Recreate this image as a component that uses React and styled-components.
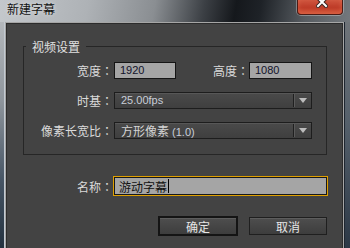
import React from 'react';
import styled, { createGlobalStyle } from 'styled-components';

const CJK = `"Noto Sans CJK SC", "Noto Sans", sans-serif`;
const LAT = `"Liberation Sans", "Noto Sans CJK SC", sans-serif`;

const Global = createGlobalStyle`
  html, body { margin: 0; padding: 0; width: 350px; height: 248px; overflow: hidden; background: #434343; }
  * { box-sizing: border-box; }
`;

const Window = styled.div`
  width: 350px;
  height: 248px;
  display: flex;
  flex-direction: column;
  overflow: hidden;
`;

const TitleBar = styled.div`
  height: 22px;
  flex: none;
  display: flex;
  align-items: flex-start;
  justify-content: space-between;
  padding: 0 7px;
  background: linear-gradient(100deg, #c4c8cc 0%, #aeb2b6 25%, #8a8e92 44%, #3c4045 58%, #15181c 67%, #1e2227 74%, #575c61 87%, #73787d 100%);
`;

const Title = styled.div`
  font-family: ${CJK};
  font-size: 12px;
  line-height: 14px;
  padding-top: 2px;
  color: #121212;
  text-shadow: 0 0 4px rgba(255, 255, 255, 0.6);
`;

const CloseButton = styled.div`
  width: 46px;
  height: 15px;
  display: flex;
  justify-content: center;
  align-items: flex-start;
  overflow: hidden;
  border: 1px solid #4a1c16;
  border-top: none;
  border-radius: 0 0 4px 4px;
  background: linear-gradient(#d0563f, #bd3a27 55%, #c5452d);
  box-shadow: 0 0 0 1px rgba(255, 255, 255, 0.3), inset 0 -3px 5px rgba(255, 150, 110, 0.35);
  svg { margin-left: 4px; margin-top: -4px; flex: none; }
`;

const Body = styled.div`
  flex: 1;
  display: flex;
  min-height: 0;
`;

const LeftEdge = styled.div`
  width: 5px;
  flex: none;
  background: linear-gradient(to bottom, #b4b8bc 0%, #8e959c 35%, #465565 70%, #243240 100%);
  box-shadow: inset -1px 0 0 #c2cad2;
`;

const RightEdge = styled.div`
  width: 6px;
  flex: none;
  background: linear-gradient(to bottom, #6f7479 0%, #55606b 45%, #2c3846 100%);
  box-shadow: inset 1px 0 0 #1e2630;
`;

const Panel = styled.div`
  flex: 1;
  display: flex;
  flex-direction: column;
  background: #434343;
  border: 1px solid #a6a6a6;
  border-bottom: none;
  box-shadow: inset 1px 1px 0 #2c2c2c, inset -1px 0 0 #2c2c2c;
  padding: 17px 16px 0 17px;
`;

const Group = styled.fieldset`
  margin: 0;
  padding: 0;
  min-width: 0;
  border: 1px solid #262626;
`;

const Legend = styled.legend`
  margin-left: 2px;
  padding: 0 6px;
  font-family: ${CJK};
  font-size: 12px;
  line-height: 13px;
  color: #e0e0e0;
`;

const FormGrid = styled.div`
  display: grid;
  grid-template-columns: 89px 198px;
  column-gap: 1px;
  row-gap: 13px;
  align-items: center;
  padding: 9px 0 15px 0;
`;

const Label = styled.div`
  text-align: right;
  white-space: nowrap;
  font-family: ${CJK};
  font-size: 12px;
  line-height: 17px;
  color: #dadada;
  ${p => p.$width ? `width: ${p.$width}px; flex: none;` : ''}
`;

const Colon = styled.span`
  font-family: "Noto Sans CJK TC", "Noto Sans CJK SC", sans-serif;
`;

const FieldRow = styled.div`
  display: flex;
  align-items: center;
  justify-content: space-between;
`;

const Pair = styled.div`
  display: flex;
  align-items: center;
`;

const TextBox = styled.div`
  width: ${p => p.$w}px;
  height: 17px;
  background: #a5a5a5;
  border: 1px solid #151515;
  padding-left: 5px;
  font-family: ${LAT};
  font-size: 11px;
  line-height: 15px;
  color: #12122a;
`;

const Select = styled.div`
  height: 17px;
  display: flex;
  border: 1px solid #1d1d1d;
  background: linear-gradient(#4a4a4a, #3f3f3f);
  box-shadow: inset 0 1px 0 #575757;
`;

const SelectValue = styled.div`
  flex: 1;
  padding-left: 6px;
  font-family: ${LAT};
  font-size: 11px;
  line-height: 15px;
  color: #c8ced8;
  white-space: nowrap;
`;

const CjkPart = styled.span`
  font-family: ${CJK};
  font-size: 12px;
  color: #d4d4d4;
`;

const Divider = styled.div`
  width: 2px;
  margin: 1px 0;
  border-left: 1px solid #1f1f1f;
  border-right: 1px solid #5a5a5a;
`;

const Arrow = styled.div`
  width: 16px;
  display: flex;
  align-items: center;
  justify-content: center;
`;

const NameRow = styled.div`
  margin-top: 21px;
  display: flex;
  align-items: center;
`;

const NameInput = styled.div`
  flex: 1;
  margin-right: -1px;
  height: 20px;
  display: flex;
  align-items: center;
  background: #a5a5a5;
  border: 1px solid #e0a000;
  box-shadow: inset 0 0 0 1px #181818;
  padding-left: 5px;
  font-family: ${CJK};
  font-size: 12px;
  color: #111;
`;

const Caret = styled.span`
  width: 1px;
  height: 14px;
  margin-left: 1px;
  background: #000;
`;

const ButtonRow = styled.div`
  margin-top: 20px;
  display: flex;
  justify-content: flex-end;
  align-items: center;
  gap: 11px;
`;

const Button = styled.div`
  width: ${p => (p.$primary ? 80 : 78)}px;
  height: ${p => (p.$primary ? 20 : 18)}px;
  display: flex;
  align-items: center;
  justify-content: center;
  border: ${p => (p.$primary ? '2px solid #141414' : '1px solid #1f1f1f')};
  background: linear-gradient(#4e4e4e, #3d3d3d);
  box-shadow: inset 0 1px 0 #5d5d5d;
  font-family: ${CJK};
  font-size: 12px;
  color: #e6e6e6;
`;

const DropArrow = () => (
  <svg width="8" height="5" viewBox="0 0 8 5">
    <path d="M0 0 H8 L4 5 Z" fill="#bcbcbc" />
  </svg>
);

const CloseX = () => (
  <svg width="12" height="12" viewBox="0 0 12 12">
    <path d="M2 2 L10 10 M10 2 L2 10" stroke="#3b2420" strokeWidth="4" strokeLinecap="square" />
    <path d="M2 2 L10 10 M10 2 L2 10" stroke="#ffffff" strokeWidth="2" strokeLinecap="square" />
  </svg>
);

export default function App() {
  return (
    <>
      <Global />
      <Window>
        <TitleBar>
          <Title>新建字幕</Title>
          <CloseButton><CloseX /></CloseButton>
        </TitleBar>
        <Body>
          <LeftEdge />
          <Panel>
            <Group>
              <Legend>视频设置</Legend>
              <FormGrid>
                <Label>宽度<Colon>：</Colon></Label>
                <FieldRow>
                  <TextBox $w={62}>1920</TextBox>
                  <Pair>
                    <Label>高度<Colon>：</Colon></Label>
                    <TextBox $w={63}>1080</TextBox>
                  </Pair>
                </FieldRow>
                <Label>时基<Colon>：</Colon></Label>
                <Select>
                  <SelectValue>25.00fps</SelectValue>
                  <Divider />
                  <Arrow><DropArrow /></Arrow>
                </Select>
                <Label>像素长宽比<Colon>：</Colon></Label>
                <Select>
                  <SelectValue><CjkPart>方形像素</CjkPart> (1.0)</SelectValue>
                  <Divider />
                  <Arrow><DropArrow /></Arrow>
                </Select>
              </FormGrid>
            </Group>
            <NameRow>
              <Label $width={90}>名称<Colon>：</Colon></Label>
              <NameInput>游动字幕<Caret /></NameInput>
            </NameRow>
            <ButtonRow>
              <Button $primary>确定</Button>
              <Button>取消</Button>
            </ButtonRow>
          </Panel>
          <RightEdge />
        </Body>
      </Window>
    </>
  );
}
